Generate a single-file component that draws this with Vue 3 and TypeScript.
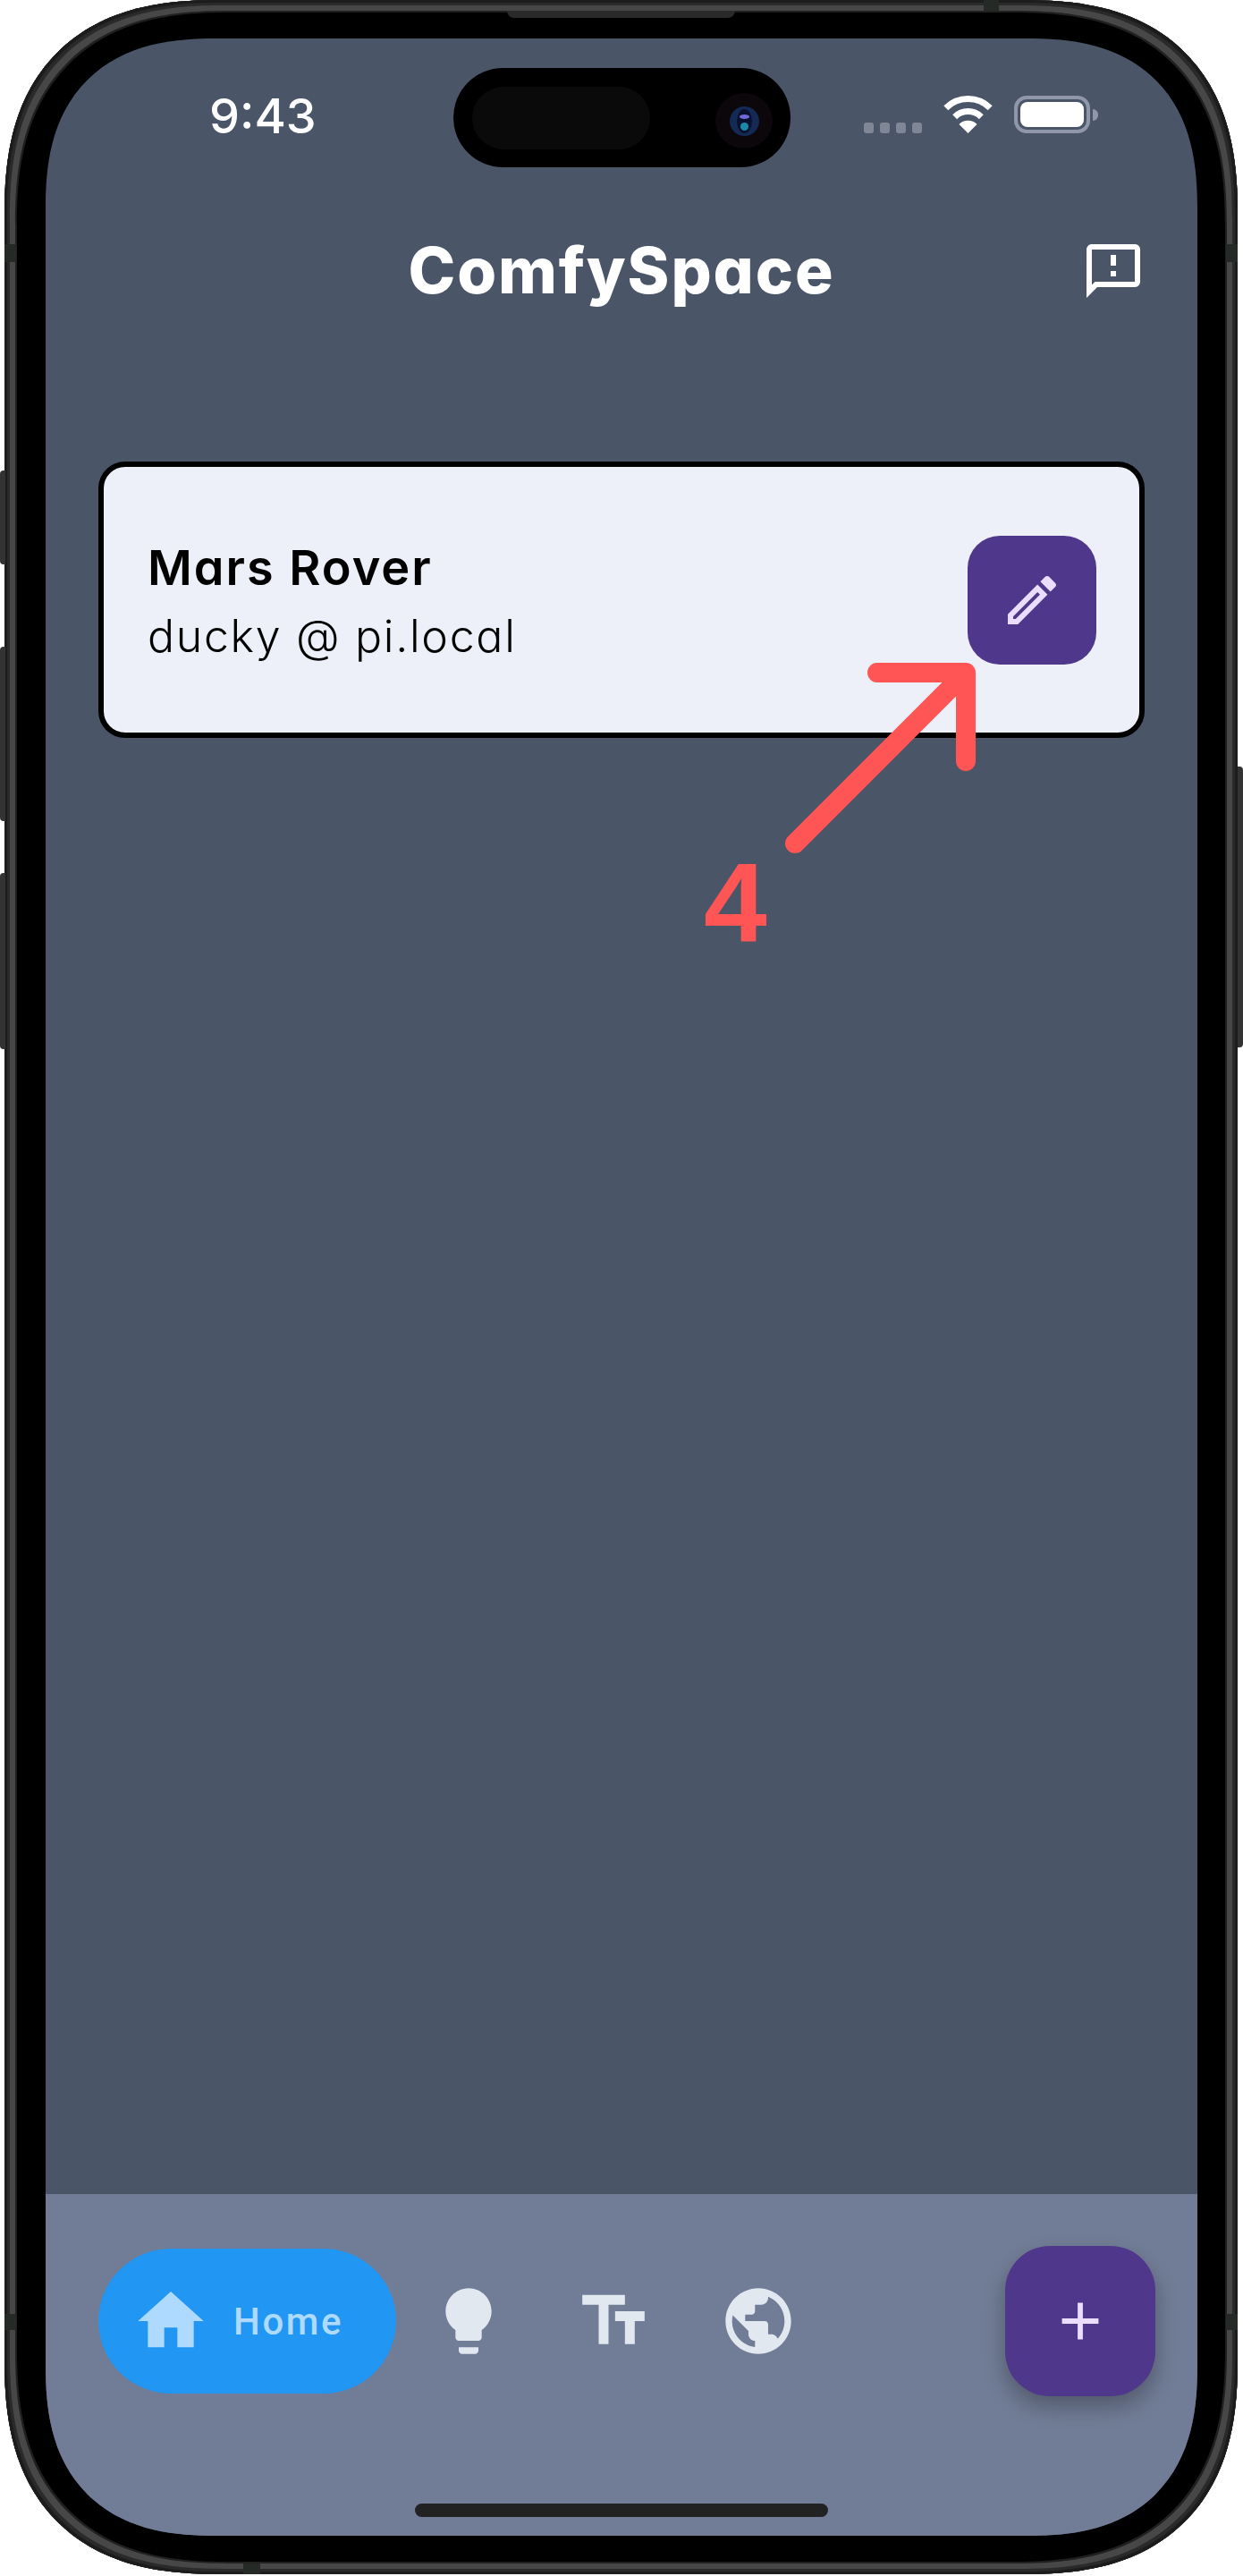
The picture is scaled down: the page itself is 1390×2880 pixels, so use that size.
<script setup lang="ts">
interface NavIcon {
  name: string
  path: string
}

const homePath = 'M10 20v-6h4v6h5v-8h3L12 3 2 12h3v8z'
const feedbackPath =
  'M20 4v12H5.17L4 17.17V4h16m0-2H4c-1.1 0-1.99.9-1.99 2L2 22l4-4h14c1.1 0 2-.9 2-2V4c0-1.1-.9-2-2-2zm-7 10h-2v2h2v-2zm0-6h-2v4h2V6z'
const editPath =
  'M3 17.25V21h3.75L17.81 9.94l-3.75-3.75L3 17.25zM5.92 19H5v-.92l9.06-9.06.92.92L5.92 19zM20.71 5.63l-2.34-2.34c-.2-.2-.45-.29-.71-.29s-.51.1-.7.29l-1.83 1.83 3.75 3.75 1.83-1.83c.39-.39.39-1.02 0-1.41z'
const addPath = 'M19 13h-6v6h-2v-6H5v-2h6V5h2v6h6v2z'

const navIcons: NavIcon[] = [
  {
    name: 'tips',
    path: 'M9 21c0 .55.45 1 1 1h4c.55 0 1-.45 1-1v-1H9v1zm3-19C8.14 2 5 5.14 5 9c0 2.38 1.19 4.47 3 5.74V17c0 .55.45 1 1 1h6c.55 0 1-.45 1-1v-2.26c1.81-1.27 3-3.36 3-5.74 0-3.86-3.14-7-7-7z',
  },
  { name: 'text', path: 'M2.5 4v3h5v12h3V7h5V4h-13zm19 5h-9v3h3v7h3v-7h3V9z' },
  {
    name: 'web',
    path: 'M12 2C6.48 2 2 6.48 2 12s4.48 10 10 10 10-4.48 10-10S17.52 2 12 2zM4 12c0-.61.08-1.21.21-1.78L8.99 15v1c0 1.1.9 2 2 2v1.93C7.06 19.43 4 16.07 4 12zm13.89 5.4c-.26-.81-1-1.4-1.9-1.4h-1v-3c0-.55-.45-1-1-1h-6v-2h2c.55 0 1-.45 1-1V7h2c1.1 0 2-.9 2-2v-.41C17.92 5.77 20 8.65 20 12c0 2.08-.81 3.98-2.11 5.4z',
  },
]

const signalDots = [0, 1, 2, 3]
</script>

<template>
  <div class="device">
    <!-- hardware bits sitting on the rim -->
    <i class="side-btn left b1"></i>
    <i class="side-btn left b2"></i>
    <i class="side-btn left b3"></i>
    <i class="side-btn right b4"></i>
    <i class="band band-lt"></i>
    <i class="band band-rt"></i>
    <i class="band band-lb"></i>
    <i class="band band-rb"></i>
    <i class="band band-top"></i>
    <i class="band band-bottom"></i>
    <i class="speaker"></i>

    <div class="frame">
      <div class="screen">
        <div class="island">
          <div class="island-pill"></div>
          <div class="camera">
            <div class="lens">
              <div class="lens-core">
                <i class="glint top"></i>
                <i class="glint low"></i>
              </div>
            </div>
          </div>
        </div>

        <div class="status">
          <span class="time">9:43</span>
          <div class="status-icons">
            <div class="signal">
              <i v-for="dot in signalDots" :key="dot"></i>
            </div>
            <svg class="wifi" width="57" height="42" viewBox="0 0 57 42" fill="none" stroke="#fff" stroke-width="7">
              <path d="M3.8 13.8a35 35 0 0 1 49.4 0" />
              <path d="M13.7 23.7a21 21 0 0 1 29.6 0" />
              <path d="M28.5 42L18.5 32a14 14 0 0 1 20 0z" fill="#fff" stroke="none" />
            </svg>
            <div class="battery">
              <div class="battery-body"><div class="battery-fill"></div></div>
              <i class="battery-cap"></i>
            </div>
          </div>
        </div>

        <header class="appbar">
          <h1 class="title">ComfySpace</h1>
          <svg class="feedback" width="72" height="72" viewBox="0 0 24 24" fill="#fff">
            <path :d="feedbackPath" />
          </svg>
        </header>

        <main class="content">
          <div class="card">
            <div class="card-text">
              <div class="card-name">Mars Rover</div>
              <div class="card-host">ducky @ pi.local</div>
            </div>
            <button class="edit-btn">
              <svg width="72" height="72" viewBox="0 0 24 24" fill="#eaddff">
                <path :d="editPath" />
              </svg>
            </button>
          </div>
        </main>

        <nav class="nav">
          <div class="nav-row">
            <div class="nav-home">
              <svg width="88" height="88" viewBox="0 0 24 24" fill="#aedaff">
                <path :d="homePath" />
              </svg>
              <span class="nav-label">Home</span>
            </div>
            <div v-for="icon in navIcons" :key="icon.name" class="nav-item">
              <svg width="88" height="88" viewBox="0 0 24 24" fill="#e2e8f0">
                <path :d="icon.path" />
              </svg>
            </div>
            <button class="fab">
              <svg width="70" height="70" viewBox="0 0 24 24" fill="#eaddff">
                <path :d="addPath" />
              </svg>
            </button>
          </div>
          <div class="home-indicator"></div>
        </nav>
      </div>
    </div>

    <!-- tutorial annotation drawn over the app -->
    <svg class="arrow" width="1390" height="1100" viewBox="0 0 1390 1100" fill="none">
      <path
        d="M889 943L1080 752M981 752H1080V851"
        stroke="#ff5555"
        stroke-width="22"
        stroke-linecap="round"
        stroke-linejoin="round"
      />
    </svg>
    <span class="step">4</span>
  </div>
</template>

<style>
html,
body {
  margin: 0;
  background: #fff;
}
</style>

<style scoped>
.device {
  position: relative;
  width: 1390px;
  height: 2880px;
  padding: 0 6px 2px 5px;
  box-sizing: border-box;
  overflow: hidden;
}

.frame {
  height: 100%;
  padding: 43px 45px 43px 46px;
  box-sizing: border-box;
  background: #000;
  border-radius: 240px;
  corner-shape: superellipse(1.3);
  box-shadow:
    inset 0 0 0 3px #1c1c1c,
    inset 0 0 0 6px #2a2a2a,
    inset 0 0 0 12px #474747,
    inset 0 0 0 14px #202020;
}

.screen {
  position: relative;
  display: flex;
  flex-direction: column;
  height: 100%;
  overflow: hidden;
  background: #4a5568;
  border-radius: 190px;
  corner-shape: superellipse(1.3);
  font-family: Inter, "Liberation Sans", sans-serif;
}

.side-btn {
  position: absolute;
  width: 6px;
  background: #333;
}
.side-btn.left {
  left: 0;
  border-radius: 4px 0 0 4px;
}
.side-btn.right {
  right: 0;
  border-radius: 0 4px 4px 0;
}
.b1 {
  top: 526px;
  height: 105px;
}
.b2 {
  top: 723px;
  height: 195px;
}
.b3 {
  top: 976px;
  height: 197px;
}
.b4 {
  top: 857px;
  height: 314px;
}

.band {
  position: absolute;
  z-index: 1;
  background: #252a26;
}
.band-lt,
.band-lb {
  left: 5px;
  width: 13px;
}
.band-rt,
.band-rb {
  left: 1371px;
  width: 13px;
}
.band-lt,
.band-rt {
  top: 273px;
  height: 20px;
}
.band-lb,
.band-rb {
  top: 2587px;
  height: 18px;
}
.band-top {
  top: 0;
  left: 1100px;
  width: 17px;
  height: 12px;
}
.band-bottom {
  top: 2866px;
  left: 272px;
  width: 19px;
  height: 12px;
}

.speaker {
  position: absolute;
  z-index: 1;
  top: 12px;
  left: 567px;
  width: 255px;
  height: 8px;
  background: #2a2a2a;
  border-radius: 0 0 8px 8px;
}

.island {
  position: absolute;
  top: 33px;
  left: 456px;
  display: flex;
  align-items: center;
  justify-content: space-between;
  width: 377px;
  height: 111px;
  padding: 0 20px 0 21px;
  box-sizing: border-box;
  background: #000;
  border-radius: 56px;
}

.island-pill {
  width: 199px;
  height: 70px;
  background: #0a0a0a;
  border-radius: 35px;
}

.camera {
  display: flex;
  align-items: center;
  justify-content: center;
  width: 64px;
  height: 62px;
  margin-top: 7px;
  background: #0b070a;
  border-radius: 50%;
}

.lens {
  display: flex;
  align-items: center;
  justify-content: center;
  width: 33px;
  height: 33px;
  background: #142a55;
  border-radius: 50%;
}

.lens-core {
  position: relative;
  width: 17px;
  height: 27px;
  background: #0a1030;
  border-radius: 50%;
}

.glint {
  position: absolute;
  border-radius: 50%;
}
.glint.top {
  top: 6px;
  left: 3px;
  width: 11px;
  height: 5px;
  background: #7468d8;
}
.glint.low {
  top: 15px;
  left: 4px;
  width: 9px;
  height: 9px;
  background: #1b8aa6;
}

.status {
  display: flex;
  align-items: center;
  justify-content: space-between;
  height: 174px;
  padding: 0 111px 0 183px;
  flex-shrink: 0;
}

.time {
  font-size: 54px;
  font-weight: 500;
  line-height: 1;
  color: #fff;
}

.status-icons {
  display: flex;
  align-items: flex-end;
  gap: 23px;
  margin-top: -4px;
}

.signal {
  display: flex;
  gap: 7px;
}
.signal i {
  width: 11px;
  height: 12px;
  background: #7f8796;
  border-radius: 3px;
}

.wifi {
  display: block;
}

.battery {
  display: flex;
  align-items: center;
  gap: 3px;
}
.battery-body {
  width: 85px;
  height: 42px;
  padding: 3px;
  box-sizing: border-box;
  border: 4px solid #8f97a8;
  border-radius: 14px;
}
.battery-fill {
  height: 100%;
  background: #fff;
  border-radius: 8px;
}
.battery-cap {
  width: 6px;
  height: 13px;
  background: #8f97a8;
  border-radius: 0 6px 6px 0;
}

.appbar {
  position: relative;
  display: flex;
  align-items: center;
  justify-content: center;
  height: 170px;
  flex-shrink: 0;
}

.title {
  margin: 0;
  font-size: 71px;
  font-weight: 800;
  line-height: 1;
  letter-spacing: 1.9px;
  color: #fff;
  font-feature-settings: "cv11";
}

.feedback {
  position: absolute;
  top: 50px;
  right: 58px;
}

.content {
  flex: 1;
  padding: 129px 59px 0;
}

.card {
  display: flex;
  align-items: center;
  justify-content: space-between;
  height: 309px;
  padding: 0 48px 0 49px;
  box-sizing: border-box;
  background: #edf0f8;
  border: 6px solid #000;
  border-radius: 30px;
}

.card-text {
  display: flex;
  flex-direction: column;
  gap: 12px;
  color: #000;
  font-feature-settings: "cv11";
}

.card-name {
  font-size: 54px;
  font-weight: 600;
  line-height: 66px;
  letter-spacing: 2px;
}

.card-host {
  font-size: 50px;
  font-weight: 300;
  line-height: 60px;
  letter-spacing: 1.7px;
  transform: translateY(1px);
}

.edit-btn {
  display: flex;
  align-items: center;
  justify-content: center;
  width: 144px;
  height: 144px;
  padding: 0;
  background: #4f378b;
  border: none;
  border-radius: 36px;
}

.nav {
  position: relative;
  height: 382px;
  padding: 58px 47px 0 59px;
  box-sizing: border-box;
  background: #717c96;
  flex-shrink: 0;
}

.nav-row {
  display: flex;
  align-items: center;
  height: 168px;
}

.nav-home {
  display: flex;
  align-items: center;
  gap: 26px;
  width: 333px;
  height: 162px;
  padding-left: 37px;
  box-sizing: border-box;
  background: #2196f3;
  border-radius: 81px;
}

.nav-label {
  font-family: Roboto, "Liberation Sans", sans-serif;
  font-size: 42px;
  font-weight: 500;
  letter-spacing: 2.6px;
  color: #aedaff;
}

.nav-item {
  display: flex;
  align-items: center;
  justify-content: center;
  width: 162px;
  height: 162px;
}

.fab {
  display: flex;
  align-items: center;
  justify-content: center;
  width: 168px;
  height: 168px;
  padding: 0;
  margin-left: auto;
  background: #4f378b;
  border: none;
  border-radius: 50px;
  box-shadow: 0 12px 24px rgba(0, 0, 0, 0.28);
}

.home-indicator {
  position: absolute;
  bottom: 21px;
  left: 413px;
  width: 462px;
  height: 15px;
  background: #222;
  border-radius: 8px;
}

.arrow {
  position: absolute;
  top: 0;
  left: 0;
  z-index: 2;
}

.step {
  position: absolute;
  z-index: 2;
  top: 946px;
  left: 787px;
  font-family: "Liberation Sans", Arial, sans-serif;
  font-size: 127px;
  font-weight: 700;
  line-height: 127px;
  color: #ff5555;
}
</style>
